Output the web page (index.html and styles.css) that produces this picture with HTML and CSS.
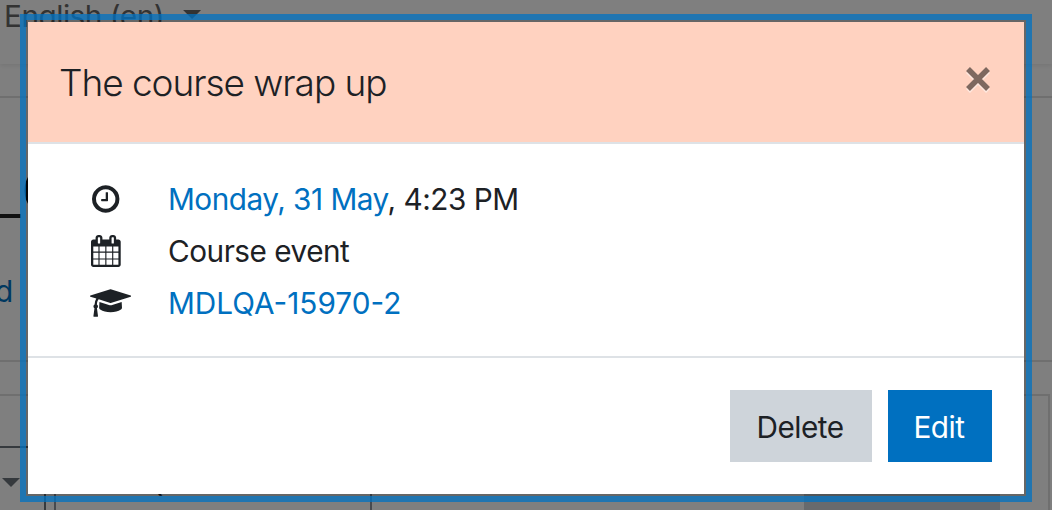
FILE: index.html
```
<!DOCTYPE html>
<html lang="en">
<head>
    <meta charset="UTF-8">
    <meta name="viewport" content="width=device-width, initial-scale=1.0">
    <title>Calendar</title>
    <link rel="stylesheet" href="styles.css">
</head>
<body>

<div class="page">
    <nav class="navbar">
        <span class="lang">English (en)</span>
        <span class="caret"></span>
    </nav>
    <div class="page-header">
        <div class="page-tab"></div>
        <h1>C</h1>
    </div>
    <div class="breadcrumb"><a href="#">d</a></div>
    <div class="calendar">
        <div class="select select-view"><span class="caret"></span></div>
        <div class="select select-course">MDLQA-15970-2</div>
        <button class="new-event">New event</button>
    </div>
</div>

<div class="backdrop">
    <div class="modal">
        <div class="modal-header">
            <h5>The course wrap up</h5>
            <button class="close">
                <svg width="28" height="28" viewBox="0 0 28 28"><path d="M4 4L24 24M24 4L4 24"/></svg>
            </button>
        </div>
        <div class="modal-body">
            <div class="row">
                <span class="icon">
                    <svg width="27.43" height="32" viewBox="0 0 1536 1792"><path d="M896 544v448q0 14-9 23t-23 9h-320q-14 0-23-9t-9-23v-64q0-14 9-23t23-9h224v-352q0-14 9-23t23-9h64q14 0 23 9t9 23zm416 352q0-148-73-273t-198-198-273-73-273 73-198 198-73 273 73 273 198 198 273 73 273-73 198-198 73-273zm224 0q0 209-103 385.500t-279.500 279.500-385.500 103-385.500-103-279.500-279.500-103-385.500 103-385.500 279.500-279.500 385.500-103 385.500 103 279.500 279.500 103 385.500z"/></svg>
                </span>
                <div class="text"><a href="#">Monday, 31 May</a>, 4:23 PM</div>
            </div>
            <div class="row">
                <span class="icon">
                    <svg width="29.71" height="32" viewBox="0 0 1664 1792"><path d="M128 1664h288v-288h-288v288zm352 0h320v-288h-320v288zm-352-352h288v-320h-288v320zm352 0h320v-320h-320v320zm-352-384h288v-288h-288v288zm736 736h320v-288h-320v288zm-384-736h320v-288h-320v288zm768 736h288v-288h-288v288zm-384-352h320v-320h-320v320zm-352-864v-288q0-13-9.500-22.500t-22.500-9.500h-64q-13 0-22.500 9.500t-9.500 22.500v288q0 13 9.500 22.500t22.500 9.500h64q13 0 22.500-9.500t9.500-22.500zm736 864h288v-320h-288v320zm-384-384h320v-288h-320v288zm384 0h288v-288h-288v288zm32-480v-288q0-13-9.500-22.500t-22.500-9.500h-64q-13 0-22.500 9.500t-9.500 22.500v288q0 13 9.500 22.500t22.500 9.500h64q13 0 22.500-9.500t9.500-22.500zm384-64v1280q0 52-38 90t-90 38h-1408q-52 0-90-38t-38-90v-1280q0-52 38-90t90-38h128v-96q0-66 47-113t113-47h64q66 0 113 47t47 113v96h384v-96q0-66 47-113t113-47h64q66 0 113 47t47 113v96h128q52 0 90 38t38 90z"/></svg>
                </span>
                <div class="text">Course event</div>
            </div>
            <div class="row">
                <span class="icon icon-wide">
                    <svg width="41.14" height="32" viewBox="0 0 2304 1792"><path d="M1774 836l18 316q4 69-82 128t-235 93.500-323 34.500-323-34.500-235-93.500-82-128l18-316 574 181q22 7 48 7t48-7zm530-324q0 23-22 31l-1120 352q-4 1-10 1t-10-1l-652-206q-43 34-71 111.500t-34 178.500q63 36 63 109 0 69-58 107l58 433q2 14-8 25-9 11-24 11h-192q-15 0-24-11-10-11-8-25l58-433q-58-38-58-107 0-73 65-111 11-207 98-330l-333-104q-22-8-22-31t22-31l1120-352q4-1 10-1t10 1l1120 352q22 8 22 31z"/></svg>
                </span>
                <div class="text text-course"><a href="#">MDLQA-15970-2</a></div>
            </div>
        </div>
        <div class="modal-footer">
            <button class="btn btn-delete">Delete</button>
            <button class="btn btn-edit">Edit</button>
        </div>
    </div>
</div>

</body>
</html>
```

FILE: styles.css
```
* {
    box-sizing: border-box;
}
body {
    margin: 0;
    height: 510px;
    overflow: hidden;
    background: #fff;
    color: #1d2125;
    font-family: Inter, "Liberation Sans", sans-serif;
    font-size: 29.75px;
    letter-spacing: -0.5px;
}
a {
    color: #0070c0;
    text-decoration: none;
}
button {
    border: none;
    font-family: inherit;
    font-size: inherit;
    letter-spacing: inherit;
}
.page {
    height: 510px;
    overflow: hidden;
}
.navbar {
    display: flex;
    height: 64px;
    padding: 0 4px;
    gap: 19px;
    color: #666;
    box-shadow: 0 2px 4px rgba(0, 0, 0, 0.08);
}
.lang {
    line-height: 32px;
}
.caret {
    width: 18px;
    height: 9px;
    margin-top: 10px;
    background: #666;
    clip-path: polygon(0 0, 100% 0, 50% 100%);
}
.page-header {
    display: flex;
    gap: 1px;
    margin-top: 32px;
    height: 170px;
    border-top: 2px solid #dfdfdf;
}
.page-tab {
    width: 21px;
    height: 120px;
    border-bottom: 4px solid #222;
}
.page-header h1 {
    margin: 68px 0 0;
    font-size: 56px;
    line-height: 50px;
    color: #111;
}
.breadcrumb {
    height: 96px;
    padding-top: 8px;
    margin-left: -5px;
    line-height: 34px;
    border-bottom: 2px solid #dfdfdf;
}
.calendar {
    display: flex;
    margin: 32px 2px 0 -2px;
    height: 150px;
    padding-top: 50px;
    border: 2px solid #dfdfdf;
}
.select {
    height: 72px;
    border: 2px solid #6c757d;
    line-height: 70px;
}
.select-view {
    width: 46px;
    margin-right: 8px;
    border-left: none;
}
.select-view .caret {
    display: block;
    margin: 30px 0 0 2px;
    background: #6a737b;
}
.select-course {
    width: 318px;
    padding-left: 22px;
    border-color: #8f959e;
    letter-spacing: 0;
}
.new-event {
    width: 196px;
    height: 72px;
    margin-left: 432px;
    background: #ced4da;
}
.backdrop {
    position: fixed;
    inset: 0;
    padding: 20px 26px;
    background: rgba(0, 0, 0, 0.5);
}
.modal {
    border: 2px solid rgba(0, 0, 0, 0.2);
    box-shadow: 0 0 0 6px rgba(0, 113, 194, 0.75);
}
.modal-header {
    display: flex;
    justify-content: space-between;
    height: 122px;
    padding: 36px 32px 0;
    background: #ffd2c0;
    border-bottom: 2px solid #dee2e6;
}
.modal-header h5 {
    margin: 0 0 0 -1px;
    font-size: 37px;
    font-weight: 300;
    line-height: 50px;
    letter-spacing: -1.05px;
}
.close {
    height: 28px;
    margin-top: 7px;
    padding: 0;
    background: none;
    opacity: 0.5;
}
.close svg {
    display: block;
    fill: none;
    stroke: #000;
    stroke-width: 5.5;
    filter: drop-shadow(0 2px 0 #fff);
}
.modal-body {
    height: 212px;
    padding: 29px 62px;
    background: #fff;
}
.row {
    display: flex;
    height: 52px;
}
.icon {
    display: flex;
    justify-content: center;
    width: 32px;
    height: 32px;
    margin: 9.5px 46px 0 0;
}
.icon-wide {
    justify-content: flex-start;
}
.icon svg {
    flex: none;
    fill: #1d2125;
}
.text {
    line-height: 52px;
}
.text-course {
    letter-spacing: 0;
}
.modal-footer {
    display: flex;
    justify-content: flex-end;
    gap: 16px;
    height: 138px;
    padding: 32px;
    background: #fff;
    border-top: 2px solid #dee2e6;
}
.btn {
    height: 72px;
    padding: 2px 2px 0 0;
}
.btn-delete {
    width: 142px;
    background: #ced4da;
    color: #1d2125;
}
.btn-edit {
    width: 104px;
    background: #0070c0;
    color: #fff;
}
```
